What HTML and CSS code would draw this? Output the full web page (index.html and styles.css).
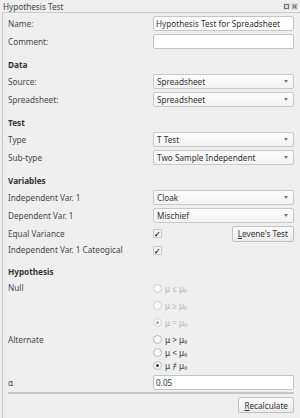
FILE: index.html
```html
<!DOCTYPE html>
<html>
<head>
  <title>Hypothesis Test</title>
  <link rel="stylesheet" href="styles.css">
</head>
<body>
  <div id="titleBar">
    <span class="title">Hypothesis Test</span>
    <div class="title-buttons">
      <span class="tb-btn">
        <svg width="7" height="7" viewBox="0 0 7 7"><rect x="1.5" y="1.5" width="4" height="4" fill="none" stroke="#777" stroke-width="1"/></svg>
      </span>
      <span class="tb-btn">
        <svg width="7" height="7" viewBox="0 0 7 7"><path d="M1.5 1.5 L5.5 5.5 M5.5 1.5 L1.5 5.5" stroke="#777" stroke-width="1.2"/></svg>
      </span>
    </div>
  </div>

  <div id="panel">
    <div class="form">
      <label class="lbl">Name:</label>
      <input class="field" type="text" value="Hypothesis Test for Spreadsheet">
      <label class="lbl">Comment:</label>
      <input class="field" type="text" value="">

      <div class="section">Data</div>
      <label class="lbl">Source:</label>
      <div class="combo">Spreadsheet</div>
      <label class="lbl">Spreadsheet:</label>
      <div class="combo">Spreadsheet</div>

      <div class="section">Test</div>
      <label class="lbl">Type</label>
      <div class="combo">T Test</div>
      <label class="lbl">Sub-type</label>
      <div class="combo">Two Sample Independent</div>

      <div class="section">Variables</div>
      <label class="lbl">Independent Var. 1</label>
      <div class="combo">Cloak</div>
      <label class="lbl">Dependent Var. 1</label>
      <div class="combo">Mischief</div>
      <label class="lbl">Equal Variance</label>
      <div class="check-row">
        <span class="check">&#10003;</span>
        <button class="btn"><u>L</u>evene's Test</button>
      </div>
      <label class="lbl">Independent Var. 1 Cateogical</label>
      <div class="check-row small">
        <span class="check">&#10003;</span>
      </div>

      <div class="section">Hypothesis</div>
      <label class="lbl top">Null</label>
      <div class="radios null">
        <div class="radio disabled"><span class="dot"></span>μ ≤ μ₀</div>
        <div class="radio disabled"><span class="dot"></span>μ ≥ μ₀</div>
        <div class="radio disabled"><span class="dot on"></span>μ = μ₀</div>
      </div>
      <label class="lbl top">Alternate</label>
      <div class="radios alt">
        <div class="radio"><span class="dot"></span>μ &gt; μ₀</div>
        <div class="radio"><span class="dot"></span>μ &lt; μ₀</div>
        <div class="radio"><span class="dot on"></span>μ ≠ μ₀</div>
      </div>
      <label class="lbl">α</label>
      <input class="field" type="text" value="0.05">
    </div>

    <div class="separator"></div>

    <div class="actions">
      <button class="btn"><u>R</u>ecalculate</button>
    </div>
  </div>
</body>
</html>
```

FILE: styles.css
```css
body {
  margin: 0;
  width: 300px;
  height: 418px;
  overflow: hidden;
  background-color: #efefef;
  font-family: "Noto Sans", sans-serif;
  font-size: 8.2px;
  color: #3c3c3c;
}

#titleBar {
  height: 12px;
  display: flex;
  align-items: center;
  justify-content: space-between;
  padding: 0 2px 0 3px;
}

#titleBar .title {
  color: #444;
}

.title-buttons {
  display: flex;
  gap: 1px;
}

.tb-btn {
  width: 7px;
  height: 7px;
  background-color: #dcdcdc;
  display: flex;
}

#panel {
  margin-left: 2px;
  border-left: 1px solid #cacaca;
  border-top: 1px solid #cacaca;
  height: 405px;
  padding: 3px 5px 0 5px;
}

.form {
  display: grid;
  grid-template-columns: 145px 141px;
  row-gap: 3px;
  align-items: center;
}

.lbl {
  line-height: 12px;
  color: #474747;
}

.lbl.top {
  align-self: start;
  margin-top: 1px;
}

.section {
  grid-column: 1 / 3;
  font-weight: bold;
  color: #333;
  line-height: 12px;
  margin-top: 7px;
}

.field {
  box-sizing: border-box;
  height: 15px;
  margin: 0;
  padding: 0 2px;
  border: 1px solid #c4c4c4;
  border-radius: 2px;
  background-color: #fff;
  font-family: inherit;
  font-size: 8.2px;
  color: #333;
  outline: none;
}

.combo {
  box-sizing: border-box;
  height: 15px;
  padding: 0 3px;
  border: 1px solid #c8c8c8;
  border-radius: 2px;
  background: linear-gradient(#fdfdfd, #f3f3f3);
  color: #333;
  line-height: 13px;
  position: relative;
}

.combo::after {
  content: "";
  position: absolute;
  right: 5px;
  top: 5px;
  border-left: 2.5px solid transparent;
  border-right: 2.5px solid transparent;
  border-top: 3px solid #777;
}

.check-row {
  height: 15px;
  display: flex;
  align-items: center;
  justify-content: space-between;
}

.check-row.small {
  height: 10px;
}

.check {
  box-sizing: border-box;
  width: 9px;
  height: 9px;
  border: 1px solid #c4c4c4;
  border-radius: 1px;
  background-color: #f6f6f6;
  font-size: 8px;
  line-height: 7px;
  text-align: center;
  color: #222;
  font-weight: bold;
}

.btn {
  box-sizing: border-box;
  height: 16px;
  padding: 0 5px;
  border: 1px solid #c0c0c0;
  border-radius: 2px;
  background: linear-gradient(#fbfbfb, #ececec);
  font-family: inherit;
  font-size: 8.2px;
  color: #333;
}

.radios {
  display: flex;
  flex-direction: column;
}

.radios.null {
  gap: 2px;
}

.radios.null .radio {
  height: 15px;
}

.radios.alt .radio {
  height: 13px;
}

.radio {
  display: flex;
  align-items: center;
  gap: 3px;
  color: #333;
}

.radio.disabled {
  color: #b4b4b4;
}

.dot {
  box-sizing: border-box;
  width: 9px;
  height: 9px;
  border: 1px solid #b8b8b8;
  border-radius: 50%;
  background-color: #f8f8f8;
  display: flex;
  align-items: center;
  justify-content: center;
}

.dot.on::after {
  content: "";
  width: 3px;
  height: 3px;
  border-radius: 50%;
  background-color: #333;
}

.radio.disabled .dot {
  border-color: #cfcfcf;
}

.radio.disabled .dot.on::after {
  background-color: #aaa;
}

.separator {
  height: 2px;
  margin-top: 2px;
  background-color: #c6c6c6;
  width: 286px;
}

.actions {
  display: flex;
  justify-content: flex-end;
  width: 286px;
  margin-top: 3px;
}
```
